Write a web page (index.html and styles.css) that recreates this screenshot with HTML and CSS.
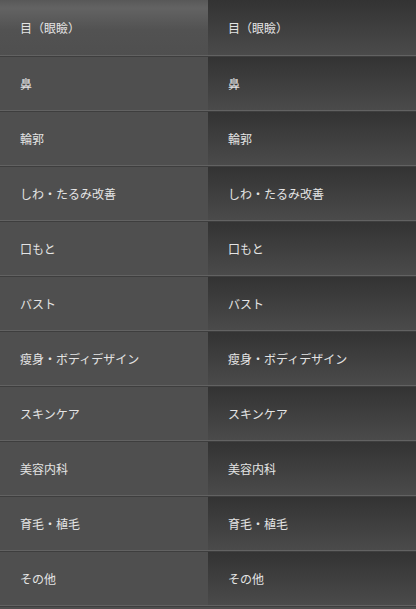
FILE: index.html
```html
<!DOCTYPE html>
<html lang="ja">
<head>
<meta charset="utf-8">
<link rel="stylesheet" href="styles.css">
</head>
<body>
<div class="menu">
  <ul class="col col-left">
    <li class="item first">目（眼瞼）</li>
    <li class="item">鼻</li>
    <li class="item">輪郭</li>
    <li class="item">しわ・たるみ改善</li>
    <li class="item">口もと</li>
    <li class="item">バスト</li>
    <li class="item">瘦身・ボディデザイン</li>
    <li class="item">スキンケア</li>
    <li class="item">美容内科</li>
    <li class="item">育毛・植毛</li>
    <li class="item">その他</li>
  </ul>
  <ul class="col col-right">
    <li class="item first">目（眼瞼）</li>
    <li class="item">鼻</li>
    <li class="item">輪郭</li>
    <li class="item">しわ・たるみ改善</li>
    <li class="item">口もと</li>
    <li class="item">バスト</li>
    <li class="item">瘦身・ボディデザイン</li>
    <li class="item">スキンケア</li>
    <li class="item">美容内科</li>
    <li class="item">育毛・植毛</li>
    <li class="item">その他</li>
  </ul>
</div>
</body>
</html>
```
FILE: styles.css
```css
html, body {
  margin: 0;
  padding: 0;
  background: #4f4f4f;
}
body {
  font-family: "Noto Sans CJK JP", "Noto Sans", sans-serif;
  font-size: 12px;
  color: #e4e4e4;
}
.menu {
  display: grid;
  grid-template-columns: 208px 208px;
  height: 609px;
  overflow: hidden;
}
.col {
  list-style: none;
  margin: 0;
  padding: 0;
  display: flex;
  flex-direction: column;
}
.item {
  flex: none;
  height: 54px;
  display: flex;
  align-items: center;
  padding-left: 20px;
  border-bottom: 1px solid #3e3e3e;
  box-shadow: inset 0 -1px 0 #626262;
  box-sizing: content-box;
  line-height: 1;
}
.item.first {
  height: 56px;
}
.col-left .item {
  background: #4f4f4f;
}
.col-left .item.first {
  background: linear-gradient(#585858 0px, #636363 8px, #525252 30px, #4f4f4f 56px);
}
.col-right .item {
  background: linear-gradient(#333333, #4b4b4b);
}
```
